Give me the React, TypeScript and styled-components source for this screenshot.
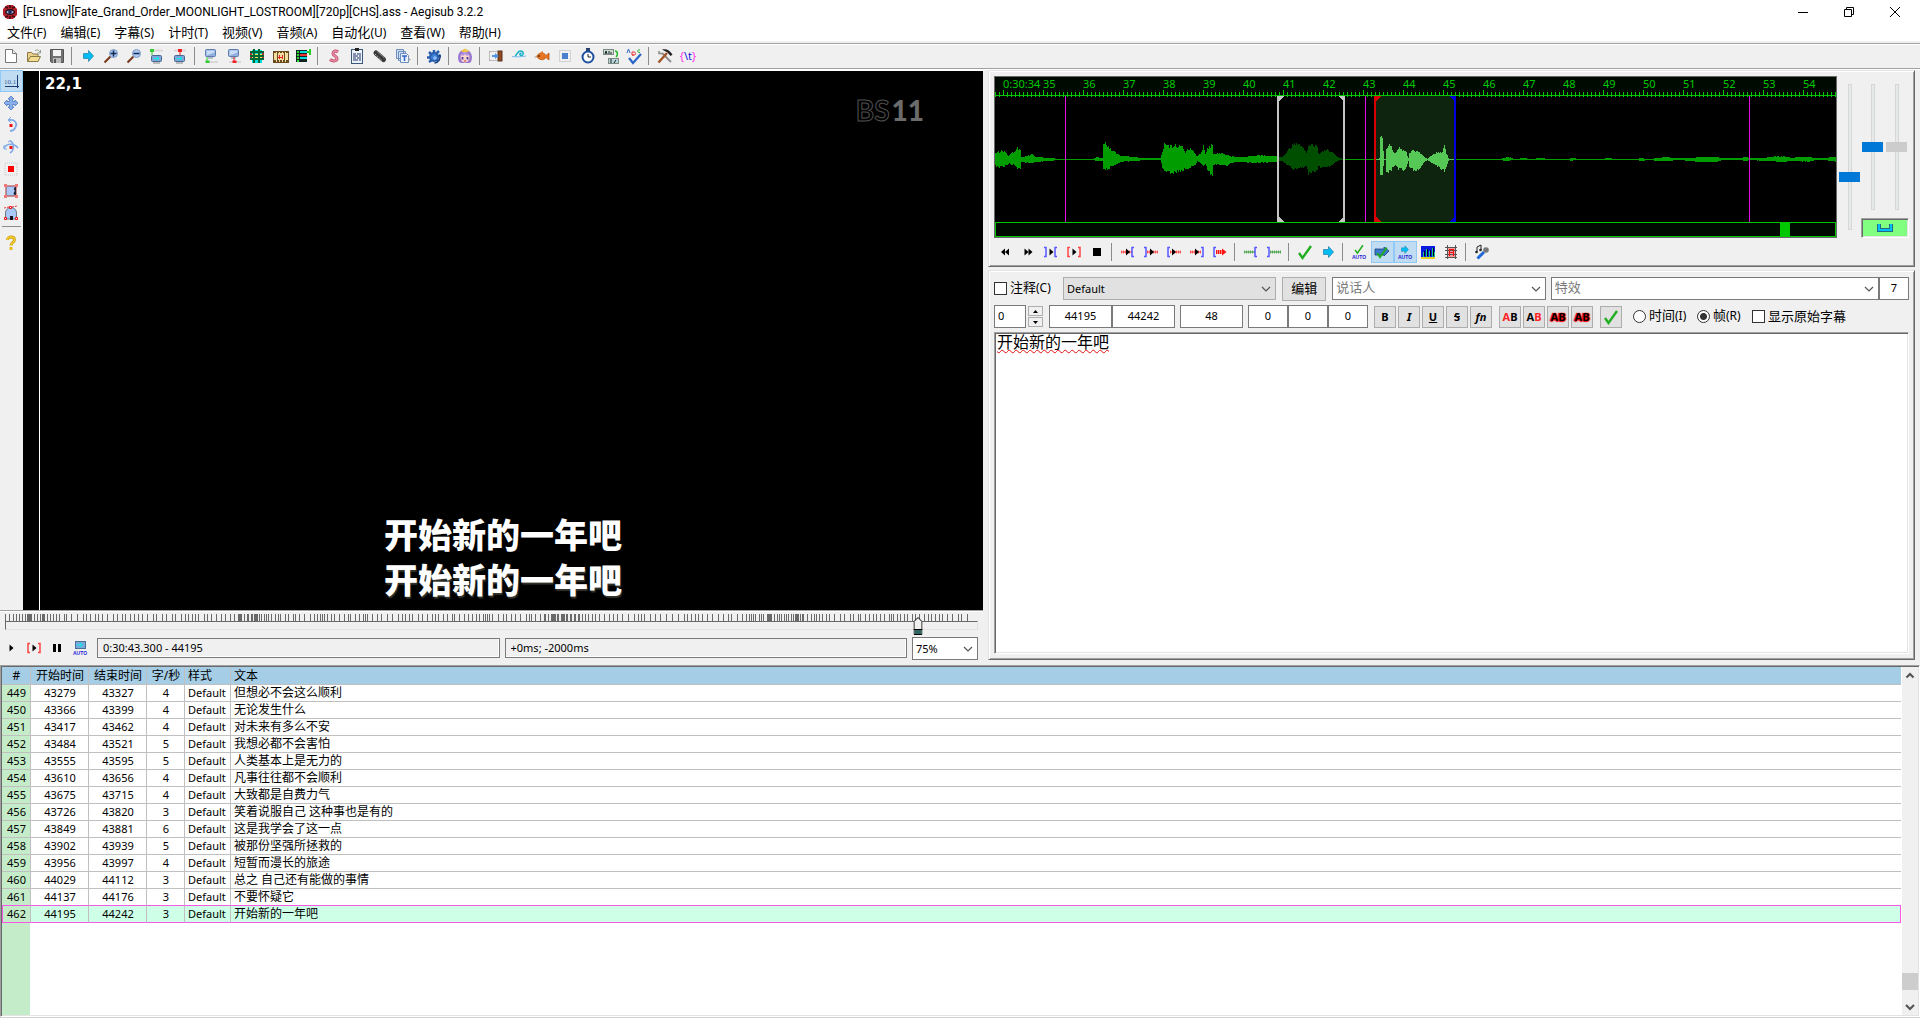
import React from "react";
import styled, { createGlobalStyle, css } from "styled-components";

const UI_FONT = `"Noto Sans", "Noto Sans CJK SC", sans-serif`;

const GlobalStyle = createGlobalStyle`
  *, *::before, *::after { box-sizing: border-box; }
  body { margin: 0; background: #f0f0f0; font-family: ${UI_FONT}; font-size: 11px; color: #000; overflow: hidden; }
  button, input, select, textarea { font: inherit; color: inherit; margin: 0; border-radius: 0; outline: none; }
`;

const raised = css`
  border: 1px solid;
  border-color: #e3e3e3 #696969 #696969 #e3e3e3;
  box-shadow: inset 1px 1px 0 #fff, inset -1px -1px 0 #a0a0a0;
`;

const Window = styled.div`
  display: flex;
  flex-direction: column;
  height: 100vh;
  border-bottom: 1px solid #d2d2d2;
`;

/* ---------- title bar and menu ---------- */

const TitleBar = styled.header`
  display: flex;
  align-items: center;
  height: 24px;
  flex: none;
  padding: 0 2px;
  background: #fff;
`;
const Title = styled.h1`
  flex: 1;
  margin: 0 0 0 5px;
  font-family: Roboto, "Noto Sans", sans-serif;
  font-size: 12px;
  line-height: 20px;
  font-weight: 400;
  white-space: nowrap;
`;
const CaptionButton = styled.button`
  display: flex;
  align-items: center;
  justify-content: center;
  width: 46px;
  height: 20px;
  padding: 0;
  border: 0;
  background: none;
`;
const MenuBar = styled.nav`
  display: flex;
  height: 19px;
  flex: none;
  background: #fff;
  border-bottom: 2px solid #f0f0f0;
`;
const MenuItem = styled.button`
  padding: 0 7px;
  border: 0;
  background: none;
  font-size: 13px;
  line-height: 16px;
  white-space: nowrap;
`;
const Mnemonic = styled.span`
  font-size: 12px;
`;

/* ---------- tool bars ---------- */

const ToolBar = styled.div`
  display: flex;
  flex: none;
  height: 26px;
  border-top: 1px solid #a0a0a0;
  border-bottom: 1px solid #a0a0a0;
  box-shadow: inset 0 1px 0 #fff;
  padding-top: 1px;
`;
const ToolStrip = styled.div<{ $vertical?: boolean }>`
  display: flex;
  flex-direction: ${(p) => (p.$vertical ? "column" : "row")};
  flex: none;
`;
const ToolButton = styled.button<{ $on?: boolean }>`
  display: flex;
  align-items: center;
  justify-content: center;
  width: 23px;
  height: 22px;
  flex: none;
  padding: 0 1px 0 0;
  border: 1px solid ${(p) => (p.$on ? "#90c8f6" : "transparent")};
  background: ${(p) => (p.$on ? "#c0dcf3" : "none")};
`;
const Separator = styled.span<{ $vertical?: boolean }>`
  flex: none;
  width: ${(p) => (p.$vertical ? "23px" : "8px")};
  height: ${(p) => (p.$vertical ? "8px" : "22px")};
  padding: ${(p) => (p.$vertical ? "2px 2px 5px" : "2px 5px 2px 2px")};
  background: #8c8c8c content-box;
`;
const Svg16 = styled.svg`
  width: 16px;
  height: 16px;
  display: block;
  overflow: visible;
`;

/* ---------- main split ---------- */

const Upper = styled.main`
  display: flex;
  flex: none;
  margin-top: 1px;
  box-shadow: 0 -1px 0 #fff;
`;
const VideoColumn = styled.section`
  flex: none;
  display: flex;
  flex-direction: column;
  padding-bottom: 5px;
`;
const VideoRow = styled.div`
  display: flex;
  border-bottom: 1px solid #a0a0a0;
  box-shadow: 0 1px 0 #fff;
`;
const Video = styled.div`
  position: relative;
  width: 960px;
  aspect-ratio: 16 / 9;
  background: #000;
  border-top: 1px solid #fff;
  color: #fff;
`;
const CrossLine = styled.div`
  position: absolute;
  top: 0;
  bottom: 0;
  left: 16px;
  width: 1px;
  background: #fff;
`;
const Coordinates = styled.div`
  position: absolute;
  left: 22px;
  top: 2px;
  font-family: "DejaVu Sans", sans-serif;
  font-size: 15px;
  line-height: 22px;
  font-weight: 700;
`;
const Channel = styled.div`
  position: absolute;
  right: 59px;
  top: 20px;
  display: flex;
  gap: 2px;
  font-family: Lato, sans-serif;
  font-size: 28px;
  line-height: 38px;
  font-weight: 900;
  color: #6b6b6b;
`;
const Outlined = styled.span`
  font-weight: 700;
  color: #000;
  -webkit-text-stroke: 1px #505050;
`;
const Subtitles = styled.div`
  position: absolute;
  inset: auto 0 9px;
  text-align: center;
  font-family: "Noto Sans CJK SC", sans-serif;
  font-size: 34px;
  line-height: 45px;
  font-weight: 900;
`;
const SubtitleLine = styled.div<{ $shadow?: boolean }>`
  text-shadow: ${(p) => (p.$shadow ? "1px 2px 1px #33332c" : "none")};
`;

const SeekBar = styled.div`
  position: relative;
  height: 26px;
  margin: 0 5px;
  padding-top: 3px;
`;
const Ticks = styled.svg`
  display: block;
  width: 100%;
  height: 7px;
`;
const Trough = styled.div`
  height: 9px;
  border: 1px solid;
  border-color: #696969 #e3e3e3 #e3e3e3 #696969;
`;
const SeekThumb = styled.svg`
  position: absolute;
  top: 6px;
  width: 9px;
  height: 18px;
  transform: translateX(-50%);
`;
const SeekInput = styled.input`
  position: absolute;
  inset: 0;
  width: 100%;
  opacity: 0;
`;
const PlayRow = styled.div`
  display: flex;
  gap: 5px;
  height: 23px;
  padding-right: 5px;
`;
const Status = styled.input`
  flex: 1;
  min-width: 0;
  height: 20px;
  margin-top: 1px;
  padding: 0 5px 2px;
  border: 1px solid #7a7a7a;
  box-shadow: inset -1px -1px 0 #fff;
  background: #f0f0f0;
  font-size: 11px;
`;

/* ---------- right side ---------- */

const SideColumn = styled.section`
  flex: 1;
  min-width: 0;
  display: flex;
  flex-direction: column;
  gap: 3px;
  padding: 0 5px 5px;
`;
const AudioBox = styled.section`
  ${raised}
  padding: 5px 5px 3px;
`;
const AudioRow = styled.div`
  display: flex;
  gap: 2px;
  margin-bottom: 3px;
`;
const AudioDisplay = styled.div`
  flex: 1;
  min-width: 0;
  height: 162px;
  border: 1px solid #696969;
  background: #000;
  overflow: hidden;
`;
const Sliders = styled.div`
  display: flex;
  flex: none;
  width: 70px;
  padding-top: 8px;
`;
const SliderPair = styled.div`
  display: flex;
  flex-wrap: wrap;
  align-content: space-between;
  width: 48px;
`;
const VSlider = styled.input<{ $length: number; $cell: number }>`
  appearance: none;
  writing-mode: vertical-lr;
  direction: rtl;
  width: ${(p) => p.$cell}px;
  height: ${(p) => p.$length}px;
  background: none;
  &::-webkit-slider-runnable-track {
    width: 4px;
    background: #e7eaea;
    border: 1px solid #d6d6d6;
  }
  &::-webkit-slider-thumb {
    appearance: none;
    width: 21px;
    height: 10px;
    margin-left: -10px;
    background: #0078d7;
  }
  &:disabled::-webkit-slider-thumb {
    background: #ccc;
  }
`;
const LinkButton = styled.button`
  display: flex;
  align-items: center;
  justify-content: center;
  width: 48px;
  height: 20px;
  padding: 0;
  border: 1px solid;
  border-color: #a0a0a0 #fff #fff #a0a0a0;
  box-shadow: inset 1px 1px 0 #696969, inset -1px -1px 0 #e3e3e3;
  background: #80ff80;
`;

const EditBox = styled.section`
  ${raised}
  flex: 1;
  min-height: 0;
  display: flex;
  flex-direction: column;
  gap: 4px;
  padding: 6px 5px 5px;
`;
const EditRow = styled.div`
  display: flex;
  align-items: flex-start;
  height: 24px;
`;
const FieldRow = styled(EditRow)`
  align-items: center;
  height: 23px;
`;
const Check = styled.label<{ $width: number }>`
  display: flex;
  align-items: center;
  gap: 3px;
  flex: none;
  width: ${(p) => p.$width}px;
  height: 23px;
  font-size: 13px;
  line-height: 18px;
  white-space: nowrap;
`;
const Caption = styled.span`
  padding-bottom: 2px;
`;
const Box = styled.input`
  appearance: none;
  flex: none;
  width: 13px;
  height: 13px;
  border: 1px solid #333;
  background: #fff;
  &[type="radio"] {
    border-radius: 50%;
  }
  &[type="radio"]:checked {
    background: radial-gradient(circle, #333 0 3px, #fff 4px);
  }
`;
const ComboFrame = styled.div<{ $grow: number; $flat?: boolean }>`
  position: relative;
  display: flex;
  flex: ${(p) => p.$grow} 1 0;
  min-width: 0;
  height: 23px;
  border: 1px solid ${(p) => (p.$flat ? "#adadad" : "#7a7a7a")};
  background: ${(p) => (p.$flat ? "#e1e1e1" : "#fff")};
`;
const ZoomFrame = styled(ComboFrame)`
  flex: 0 0 66px;
`;
const SelectField = styled.select`
  appearance: none;
  flex: 1;
  min-width: 0;
  padding: 0 3px;
  border: 0;
  background: none;
`;
const ComboInput = styled.input`
  flex: 1;
  min-width: 0;
  padding: 0 3px 3px;
  border: 0;
  background: none;
  font-size: 13px;
  &::placeholder {
    color: #7a7a7a;
  }
`;
const DropButton = styled.button`
  display: flex;
  align-items: center;
  padding: 0 4px;
  border: 0;
  background: none;
`;
const DropMark = styled.span`
  position: absolute;
  inset: 0 4px 0 auto;
  display: flex;
  align-items: center;
  pointer-events: none;
`;
const PushButton = styled.button`
  flex: none;
  width: 44px;
  height: 24px;
  padding: 0 0 2px;
  border: 1px solid #adadad;
  background: #e1e1e1;
  font-size: 13px;
  line-height: 18px;
`;
const Field = styled.input<{ $width: number; $left?: boolean }>`
  flex: none;
  width: ${(p) => p.$width}px;
  height: 23px;
  padding: 0 3px 2px;
  border: 1px solid #7a7a7a;
  background: #fff;
  text-align: ${(p) => (p.$left ? "left" : "center")};
`;
const Spinner = styled.div`
  display: flex;
  flex-direction: column;
  gap: 1px;
  width: 15px;
  margin-left: 2px;
`;
const SpinButton = styled.button`
  display: flex;
  align-items: center;
  justify-content: center;
  height: 10px;
  padding: 0;
  border: 1px solid #adadad;
  background: #f0f0f0;
`;
const Group = styled.div<{ $gap?: number; $before: number }>`
  display: flex;
  gap: ${(p) => p.$gap ?? 0}px;
  margin-left: ${(p) => p.$before}px;
`;
const StyleButton = styled.button<{ $italic?: boolean; $line?: string }>`
  display: flex;
  align-items: center;
  justify-content: center;
  width: 22px;
  height: 22px;
  padding: 0;
  border: 1px solid #adadad;
  background: #e1e1e1;
  font-size: 11px;
  font-weight: 700;
  font-style: ${(p) => (p.$italic ? "italic" : "normal")};
  text-decoration: ${(p) => p.$line ?? "none"};
`;
const Ink = styled.span<{ $fill: string; $halo?: boolean }>`
  color: ${(p) => p.$fill};
  text-shadow: ${(p) => (p.$halo ? "0 0 1px red, 1px 0 1px red, 0 1px 1px red, -1px 0 1px red" : "none")};
`;
const TextArea = styled.textarea`
  flex: 1;
  min-height: 0;
  width: 100%;
  resize: none;
  padding: 0 2px;
  border: 1px solid;
  border-color: #a0a0a0 #fff #fff #a0a0a0;
  box-shadow: inset 1px 1px 0 #696969, inset -1px -1px 0 #e3e3e3;
  background: #fff;
  font-size: 16px;
  line-height: 18px;
  text-decoration: underline wavy #e01010 1px;
  text-underline-offset: 1px;
`;

/* ---------- subtitle grid ---------- */

const GridFrame = styled.section`
  flex: 1;
  min-height: 0;
  display: flex;
  border: 1px solid;
  border-color: #a0a0a0 #fff #fff #a0a0a0;
  box-shadow: inset 1px 1px 0 #696969, inset -1px -1px 0 #e3e3e3;
  padding: 1px;
`;
const GridBody = styled.div`
  flex: 1;
  min-width: 0;
  overflow: hidden;
  background: linear-gradient(to right, #c4ecc9 28px, #fff 28px);
`;
const Table = styled.table`
  width: 100%;
  table-layout: fixed;
  border-collapse: separate;
  border-spacing: 0;
`;
const Col = styled.col<{ $width?: number }>`
  width: ${(p) => (p.$width ? `${p.$width}px` : "auto")};
`;
const cell = css`
  padding: 0 2px 0 3px;
  border-right: 1px solid #c0c0c0;
  border-bottom: 1px solid #c0c0c0;
  line-height: 16px;
  height: 17px;
  font-weight: 400;
  text-align: center;
  white-space: nowrap;
  overflow: hidden;
`;
const Head = styled.th<{ $left?: boolean }>`
  ${cell}
  height: 18px;
  padding-top: 1px;
  background: #a5cde5;
  font-size: 12px;
  text-align: ${(p) => (p.$left ? "left" : "center")};
  &:last-child {
    border-right: 0;
  }
`;
const Row = styled.tr<{ $active: boolean; $above: boolean }>`
  background: ${(p) => (p.$active ? "#ceffe7" : "#fff")};
  td,
  th {
    ${(p) => (p.$active || p.$above ? "border-bottom-color: #f858e8;" : "")}
  }
  th {
    ${(p) => (p.$active ? "border-left: 1px solid #f858e8; padding-left: 0;" : "")}
  }
  td:last-child {
    border-right: ${(p) => (p.$active ? "1px solid #f858e8" : "0")};
  }
`;
const LineNo = styled.th`
  ${cell}
  padding: 0 0 0 1px;
  background: #c4ecc9;
`;
const Cell = styled.td<{ $left?: boolean; $text?: boolean }>`
  ${cell}
  text-align: ${(p) => (p.$left ? "left" : "center")};
  font-size: ${(p) => (p.$text ? "12px" : "11px")};
`;
const ScrollBar = styled.div`
  display: flex;
  flex-direction: column;
  width: 17px;
  border-left: 1px solid #fff;
  background: #f0f0f0;
`;
const ScrollButton = styled.button`
  display: flex;
  align-items: center;
  justify-content: center;
  height: 17px;
  padding: 0;
  border: 0;
  background: none;
`;
const ScrollTrack = styled.div`
  flex: 1;
  display: flex;
  flex-direction: column;
  justify-content: flex-end;
  padding-bottom: 8px;
`;
const ScrollThumb = styled.div`
  height: 17px;
  background: #cdcdcd;
`;

/* ---------- icons ---------- */

const Monitor = ({ x = 0, y = 0 }: { x?: number; y?: number }) => (
  <g transform={`translate(${x} ${y})`}>
    <rect x=".5" y=".5" width="10" height="7" rx="1" fill="#8fb0e0" stroke="#5d7baa" />
    <path d="M1.500 1.500h8v2l-8 3z" fill="#c9dbf5" />
    <path d="M3 9h5" stroke="#7a8aa0" />
  </g>
);
const Auto = () => (
  <text x="8" y="15" fontSize="5" fontWeight="700" textAnchor="middle" fill="#2222d8" fontFamily="Liberation Sans, sans-serif">
    AUTO
  </text>
);
const Bracket = ({ x, open, color }: { x: number; open: boolean; color: string }) => (
  <path
    d={open ? `M${x + 3} 3.500h-2v9h2` : `M${x} 3.500h2v9h-2`}
    fill="none"
    stroke={color}
    strokeWidth="1.500"
  />
);
const Play = ({ x }: { x: number }) => <path d={`M${x} 4.500v7l4-3.500z`} fill="#000" />;
const Dots = ({ from, to, color = "#f33" }: { from: number; to: number; color?: string }) => (
  <>
    <path d={`M${from} 8h${to - from}`} stroke={color} strokeWidth="1" />
    <path d={`M${from} 8h${to - from}`} stroke={color} strokeWidth="3" strokeDasharray="1 1" opacity=".7" />
  </>
);
const Tick = ({ y = 0, s = 1 }: { y?: number; s?: number }) => (
  <path d="M2 9l3.500 5L14 2" transform={`translate(${8 - 8 * s} ${y}) scale(${s})`} fill="none" stroke="#1fae1f" strokeWidth="2.400" />
);
const CyanArrow = ({ x = 0, y = 0, s = 1 }: { x?: number; y?: number; s?: number }) => (
  <path
    d="M3.500 5.500h5v-3l5 5.500-5 5.500v-3h-5z"
    transform={`translate(${x} ${y}) scale(${s})`}
    fill="#00bdf5"
    stroke="#2f87ad"
    strokeWidth=".8"
  />
);
const Lens = ({ plus }: { plus?: boolean }) => (
  <>
    <path d="M1.500 14.500l6-6" stroke="#7a3b1e" strokeWidth="2.200" />
    <circle cx="10.500" cy="5.500" r="4" fill="#a9c9f3" stroke="#7f9cc4" />
    <path d={plus ? "M7.500 5.500h6M10.500 2.500v6" : "M7.500 5.500h6"} stroke="#152a55" strokeWidth="1.500" />
  </>
);
const SnapTop = ({ color, x = 3 }: { color: string; x?: number }) => (
  <>
    <path d="M2 2.500h12" stroke="#d9d9d9" strokeWidth="2" />
    <path d={`M${x} 2v5`} stroke={color} />
    <rect x={x - 2} y="1" width="4" height="3" fill={color} />
    <rect x="2.500" y="7.500" width="10" height="6" rx="1" fill="#7fa6d8" stroke="#4b6791" />
    <path d="M4.500 10.500h5M7.500 8.500l2.500 2-2.500 2" stroke="#0ee" fill="none" />
    <path d="M4 15h7" stroke="#888" />
  </>
);
const SnapBottom = ({ color, x }: { color: string; x: number }) => (
  <>
    <Monitor x={2} y={1} />
    <path d="M3 14h12" stroke="#d9d9d9" strokeWidth="2" />
    <path d={`M${x} 9v5`} stroke={color} />
    <rect x={x - 1.5} y="12.500" width="4" height="2.500" fill={color} />
  </>
);

const icons: Record<string, React.ReactNode> = {
  app: (
    <>
      <path d="M5 1h6l4 4v6l-4 4H5l-4-4V5z" fill="#b5202a" />
      <path d="M3 3l3 1M13 3l-3 1M3 13l3-1M13 13l-3-1M8 1v3M8 12v3" stroke="#3a0d12" strokeWidth="1.500" />
      <ellipse cx="8" cy="8" rx="5" ry="3" fill="#201018" />
      <ellipse cx="8" cy="8" rx="3.500" ry="1.500" fill="#9fb0d0" />
      <circle cx="8" cy="8" r="1.800" fill="#16245c" />
    </>
  ),
  new: (
    <>
      <path d="M2.500 1.500h7l4 4v9h-11z" fill="#fff" stroke="#777" />
      <path d="M9.500 1.500v4h4" fill="#eee" stroke="#777" />
    </>
  ),
  open: (
    <>
      <path d="M1.500 13.500v-9h4l1.500 1.500h5v7.500z" fill="#e9d08c" stroke="#8a7a44" />
      <path d="M1.500 13.500l3-5h10l-2.500 5z" fill="#f3dc93" stroke="#8a7a44" />
      <path d="M9 3c2-2 4-1 5 1.500M14.500 2v3h-3" fill="none" stroke="#8b9b8b" />
    </>
  ),
  save: (
    <>
      <path d="M1.500 1.500h13v13h-12l-1-1z" fill="#707070" stroke="#555" />
      <rect x="4" y="2" width="8" height="6" fill="#f3f3f3" />
      <rect x="4" y="10" width="8" height="5" fill="#bbb" />
      <rect x="5" y="11" width="2" height="4" fill="#555" />
    </>
  ),
  jump: <CyanArrow />,
  zoomIn: <Lens plus />,
  zoomOut: <Lens />,
  startVideo: <SnapTop color="#3c3" />,
  endVideo: <SnapTop color="#e22" x={8} />,
  snapStart: <SnapBottom color="#3c3" x={4} />,
  snapEnd: <SnapBottom color="#e22" x={8} />,
  scene: (
    <g shapeRendering="crispEdges">
      <rect x="1" y="3" width="14" height="8" fill="#a33" />
      <rect x="3" y="2" width="10" height="13" fill="#0dd" />
      <rect x="3" y="6" width="10" height="5" fill="#e8e05a" />
      <path d="M1 4h14M1 8h14M1 11h14M5 1v14M10 1v14" stroke="#063" strokeWidth="1.500" />
    </g>
  ),
  film: (
    <g shapeRendering="crispEdges">
      <rect x="1" y="3" width="15" height="11" fill="#f5dfa0" stroke="#6b4a1e" />
      <path d="M2 4h14M2 13h14" stroke="#6b4a1e" strokeDasharray="2 1" strokeWidth="2" />
      <path d="M5 5v7M12 5v7" stroke="#6b4a1e" />
      <path d="M6 9h5M7 7v4M10 7v4" stroke="#e22" />
    </g>
  ),
  shift: (
    <g shapeRendering="crispEdges">
      <rect x="1" y="2" width="11" height="12" fill="#122" />
      <path d="M5 4h7M5 10h7" stroke="#0dd" strokeWidth="2" />
      <path d="M5 7h7" stroke="#e33" strokeWidth="2" />
      <path d="M2 4h2M2 7h2M2 10h2M2 13h2" stroke="#3d3" strokeWidth="2" />
      <path d="M12 4h3M15 1v6" stroke="#2c2" strokeWidth="2" />
    </g>
  ),
  styles: (
    <>
      <path d="M12 4c-2.500-2-5-1-5 1.500s4 2.500 4 5-4 3.500-7 1" fill="none" stroke="#b84a68" strokeWidth="3" />
      <path d="M12 4c-2.500-2-5-1-5 1.500s4 2.500 4 5-4 3.500-7 1" fill="none" stroke="#f08aa5" strokeWidth="1.500" />
    </>
  ),
  properties: (
    <>
      <rect x="2.500" y="1.500" width="11" height="14" fill="#e9f1fb" stroke="#3d5876" />
      <rect x="6" y="0" width="4" height="3" fill="#222" />
      <path d="M4 6h3M8 6h4M4 8h5M10 8h2M4 10h3M8 10h4M4 12h5M10 12h2" stroke="#236" />
    </>
  ),
  attach: (
    <>
      <path d="M4 5l7.500 6.500" stroke="#3a3a3a" strokeWidth="5" strokeLinecap="round" />
      <path d="M3 6l7 6.500M5.500 4l7 6" stroke="#aaa" strokeWidth="1" strokeDasharray="1.500 1" />
    </>
  ),
  fonts: (
    <>
      <path d="M1.500 1.500h7v9h-7zM3.500 3.500h7v9h-7z" fill="#cfe0f6" stroke="#6d8dbb" />
      <path d="M5.500 5.500h6l2 2v7h-8z" fill="#e9f2ff" stroke="#6d8dbb" />
      <path d="M7 8h5M9.500 8v5" stroke="#3367c4" strokeWidth="1.500" />
      <path d="M13 10l3 1.500-3 1.500z" fill="#999" />
    </>
  ),
  gear: (
    <>
      <circle cx="8" cy="9" r="4" fill="#3f7fd6" stroke="#2a5fae" strokeWidth="2" />
      <path d="M8 2v4M3 4l3 3M1 9.500h4M3 14l3-2M13 3l-3 3M11 8h4M12 13l-2-2" stroke="#2a5fae" strokeWidth="2.500" />
      <path d="M13.500 6.500c2 4-1 8-5 8.500" stroke="#173f7d" strokeWidth="1.500" fill="none" />
      <circle cx="9" cy="10" r="1.800" fill="#8fc0f8" />
    </>
  ),
  girl: (
    <>
      <path d="M1 9a7 7.500 0 0 1 14 0c0 3-1 6-3 6H4c-2 0-3-3-3-6z" fill="#9a78cf" />
      <ellipse cx="8" cy="9.500" rx="4.500" ry="5" fill="#f8d8cc" />
      <path d="M3 9c0-6 10-6 10 0l-2-2-1.500 1L8 6 6.500 8 5 7z" fill="#b493e0" />
      <path d="M4 2.500l2.500-1L8 .5l1.500 1 2.500 1-1 1.500H5z" fill="#f0c84a" />
      <path d="M5.500 9v2.500M10.500 9v2.500" stroke="#5334a0" strokeWidth="1.800" />
      <path d="M7 13h2" stroke="#c33" />
    </>
  ),
  shiftTimes: (
    <>
      <path d="M1.500 3.500h7M1.500 3.500v9M1.500 12.500h7" stroke="#888" strokeDasharray="1 1" fill="none" />
      <rect x="10" y="3" width="4" height="10" fill="#8a4a24" stroke="#5f3218" />
      <path d="M4 7h3V5l3.500 3L7 11V9H4z" fill="#4d94ea" />
    </>
  ),
  kanji: (
    <>
      <path d="M1 8.500c4 .5 9 .5 14-.5" stroke="#7fb8e8" fill="none" />
      <path d="M4 8c2-.5 2-5 5.500-5 4 0 3 5 .5 4.500-2-.5-1-2.500.5-2" fill="none" stroke="#14b0c8" strokeWidth="1.500" />
    </>
  ),
  fish: (
    <>
      <path d="M2.500 8.500c2-4 7-5 9.500-1L15 5v7l-3-2.500c-2.500 3.500-7 2.500-9.500-1z" fill="#e87422" stroke="#b4560f" strokeWidth=".8" />
      <path d="M6 4.500l3-1.500v2" fill="#e87422" />
      <circle cx="5" cy="8" r=".8" fill="#000" />
      <path d="M.5 9h2" stroke="#999" />
    </>
  ),
  resample: (
    <>
      <rect x="2.500" y="2.500" width="11" height="11" fill="none" stroke="#b5b5b5" strokeDasharray="1 1" />
      <rect x="5" y="5" width="6" height="6" fill="#4b7fd0" />
    </>
  ),
  timer: (
    <>
      <rect x="6" y="0" width="4" height="3" fill="#27416b" />
      <circle cx="8" cy="9" r="5.500" fill="#fff" stroke="#1e4fa0" strokeWidth="2" />
      <path d="M8 6v3h3" stroke="#222" fill="none" />
    </>
  ),
  convert: (
    <>
      <rect x=".5" y="1.500" width="10" height="5" fill="#cfdad2" stroke="#7b8a82" />
      <path d="M2 6l1-3 1 3M6 3v3M8 4v2" stroke="#122" fill="none" />
      <rect x="5.500" y="10.500" width="10" height="5" fill="#bcd6dc" stroke="#7b8a82" />
      <path d="M8 11v4M11 15l2-3" stroke="#122" />
      <path d="M12 3c3 0 3 4 1 6" fill="none" stroke="#2b2" strokeWidth="1.500" />
    </>
  ),
  spell: (
    <>
      <path d="M1 5l1.500-4L4 5" fill="none" stroke="#36c" />
      <path d="M6 4h2a1.500 1.500 0 0 1 0 3H6zM6 7h2" fill="none" stroke="#e33" />
      <path d="M14 2c-3-1-3 3 0 2.500" fill="none" stroke="#2a2" />
      <path d="M3 10l4 5 8-9" fill="none" stroke="#2e66c8" strokeWidth="2.200" />
    </>
  ),
  options: (
    <>
      <path d="M5 5l9 9" stroke="#8c8c8c" strokeWidth="2" />
      <path d="M2 3v2.500h3" fill="none" stroke="#888" strokeWidth="1.500" />
      <path d="M1.500 14.500L10 5" stroke="#a4552a" strokeWidth="2.500" />
      <path d="M5 1.500c4-1 7.500 0 10.500 5l-2 1.500-3-3.500z" fill="#222" />
    </>
  ),
  tags: (
    <text x="8" y="12" fontSize="11" textAnchor="middle" fill="#1a1ae0" fontFamily="Noto Sans, sans-serif">
      <tspan fill="#f3e">{"{"}</tspan>
      {"\\t"}
      <tspan fill="#f3e">{"}"}</tspan>
    </text>
  ),
  cross: (
    <>
      <path d="M2 13.500h14M14.500 2v13" stroke="#1b3a6e" />
      <text x="7" y="11" fontSize="7" textAnchor="middle" fill="#3c5f94" fontFamily="Liberation Serif, serif">
        10.1
      </text>
    </>
  ),
  drag: (
    <path
      d="M8 1l3 3H9.500v2.500H12V5l3 3-3 3V9.500H9.500V12H11l-3 3-3-3h1.500V9.500H4V11L1 8l3-3v1.500h2.500V4H5z"
      fill="#8ab0ee"
      stroke="#4a76bd"
      strokeWidth=".8"
    />
  ),
  rotateZ: (
    <>
      <path d="M6 3c6-1 8 3 7 6s-3 5-6 5" fill="none" stroke="#7fa9e8" strokeWidth="1.800" />
      <path d="M8 0L5 3l3 3" fill="none" stroke="#7fa9e8" />
      <rect x="6.500" y="7" width="3" height="3" fill="#e11" />
    </>
  ),
  rotateXY: (
    <>
      <path d="M1 9c3-5 10-5 14 0M7 2c4 1 5 9 0 12" fill="none" stroke="#7fa9e8" strokeWidth="1.500" />
      <path d="M1 6v4h3M8 1L5 3" fill="none" stroke="#7fa9e8" />
      <rect x="6.500" y="7" width="3" height="3" fill="#e11" />
    </>
  ),
  scale: (
    <>
      <rect x="2" y="2" width="12" height="12" fill="none" stroke="#c5c5c5" strokeDasharray="1 1" />
      <rect x="5" y="5" width="6" height="6" fill="#f00" />
    </>
  ),
  clip: (
    <>
      <rect x="3" y="3" width="10" height="10" fill="#a9c8f8" stroke="#a33" />
      <path d="M13 4v8c-3 0-3-2-1-4-2-2-1-4 1-4z" fill="#223" />
      <path d="M1 1h3v3H1zM12 1h3v3h-3zM1 12h3v3H1zM12 12h3v3h-3z" fill="#f27878" />
    </>
  ),
  vectorClip: (
    <>
      <path d="M2.500 14V8a5.500 5.500 0 0 1 11 0v6z" fill="#a9c8f8" stroke="#678" />
      <path d="M1 3l5-1M9 2l5-1" stroke="#e33" strokeDasharray="2 1" />
      <path d="M7 11h3v4H7z" fill="#112" />
      <path d="M1.500 12.500h2v2h-2zM12.500 12.500h2v2h-2zM6.500 1.500h2v2h-2z" fill="#fff" stroke="#e11" />
    </>
  ),
  help: (
    <>
      <path d="M4.500 5c0-4 7-4 7 0 0 2.500-3.500 2.500-3.500 5.500" fill="none" stroke="#c79a10" strokeWidth="2.800" />
      <path d="M4.500 5c0-4 7-4 7 0 0 2.500-3.500 2.500-3.500 5.500" fill="none" stroke="#f7cf2a" strokeWidth="1.500" />
      <rect x="6.500" y="12" width="3" height="3" fill="#e8b918" />
    </>
  ),
  prev: <path d="M8 4.500v7L4 8zM12 4.500v7L8 8z" fill="#000" />,
  next: <path d="M4.500 4.500v7l4-3.500zM8.500 4.500v7l4-3.500z" fill="#000" />,
  playSel: (
    <>
      <Bracket x={1} open={false} color="#55f" />
      <Play x={6.5} />
      <Bracket x={11} open color="#55f" />
    </>
  ),
  playLine: (
    <>
      <Bracket x={1} open color="#f44" />
      <Play x={6.5} />
      <Bracket x={12} open={false} color="#f44" />
    </>
  ),
  stop: <rect x="4" y="4" width="8" height="8" fill="#000" />,
  beforeStart: (
    <>
      <Dots from={1} to={12} />
      <Play x={6} />
      <Bracket x={11} open color="#55f" />
    </>
  ),
  afterEnd: (
    <>
      <Dots from={4} to={15} />
      <Play x={7} />
      <Bracket x={1} open={false} color="#55f" />
    </>
  ),
  firstPart: (
    <>
      <Dots from={4} to={15} />
      <Play x={6} />
      <Bracket x={1} open color="#55f" />
    </>
  ),
  lastPart: (
    <>
      <Dots from={1} to={12} />
      <Play x={6} />
      <Bracket x={12} open={false} color="#55f" />
    </>
  ),
  toEnd: (
    <>
      <path d="M4 8h6" stroke="#f11" strokeWidth="4" strokeDasharray="1.500 .5" />
      <path d="M10 4.500v7l4.500-3.500z" fill="#f11" />
      <Bracket x={1} open color="#55f" />
    </>
  ),
  leadIn: (
    <>
      <Dots from={1} to={12} color="#393" />
      <Bracket x={11} open color="#55f" />
    </>
  ),
  leadOut: (
    <>
      <Dots from={4} to={15} color="#393" />
      <Bracket x={1} open={false} color="#55f" />
    </>
  ),
  commit: <Tick />,
  autoCommit: (
    <>
      <Tick s={0.65} />
      <Auto />
    </>
  ),
  nextCommit: (
    <>
      <path d="M1 5h9V3l5 4-5 5v-1H1z" fill="#3b78cf" stroke="#1d3f7d" strokeWidth=".8" />
      <Tick s={0.8} y={2} />
    </>
  ),
  autoNext: (
    <>
      <CyanArrow x={2} y={0} s={0.7} />
      <Auto />
    </>
  ),
  spectrum: (
    <g shapeRendering="crispEdges">
      <rect x="1" y="2" width="14" height="13" fill="#0a1ae0" />
      <path d="M3 15V8M6 15V5M9 15V7M12 15V4M14 15V8" stroke="#1c8" strokeWidth="1" />
      <path d="M1 14h14" stroke="#e8d020" strokeWidth="2" />
      <path d="M4 7v5M7 5v7M10 6v6M13 4v8" stroke="#002" />
    </g>
  ),
  keyframes: (
    <g shapeRendering="crispEdges">
      <rect x="4" y="3" width="8" height="10" fill="#f99" />
      <path d="M2 3h12M2 6h12M2 10h12M2 13h12M4 1v14M12 1v14" stroke="#555" />
      <path d="M6 12V5h4v7M6 8h4" stroke="#e11" fill="none" />
    </g>
  ),
  karaoke: (
    <>
      <path d="M3.500 14.500L10 8" stroke="#1f68d8" strokeWidth="3" />
      <circle cx="12" cy="6" r="2.800" fill="#777" />
      <path d="M3 8V3l4-2v5" fill="none" stroke="#222" />
      <circle cx="2.500" cy="8" r="1.300" fill="#222" />
      <circle cx="6.500" cy="6" r="1.300" fill="#222" />
    </>
  ),
  play: <Play x={6.5} />,
  pause: <path d="M4 4h3v8H4zM9 4h3v8H9z" fill="#000" />,
  autoScroll: (
    <>
      <rect x="3.500" y="1.500" width="10" height="7" fill="#79aadb" stroke="#4a6f98" />
      <path d="M5 5h4M8 3l2.500 2L8 7" stroke="#0ee" fill="none" />
      <Auto />
    </>
  ),
};

const Icon = ({ name }: { name: string }) => (
  <Svg16 viewBox="0 0 16 16" aria-hidden="true">
    {icons[name]}
  </Svg16>
);

const Chevron = ({ bold, up }: { bold?: boolean; up?: boolean }) => (
  <svg width="10" height="10" viewBox="0 0 10 10" aria-hidden="true">
    <path
      d={up ? "M1.500 6.500L5 3l3.500 3.500" : "M1 3l4 4 4-4"}
      fill="none"
      stroke="#555"
      strokeWidth={bold ? 2.2 : 1.2}
    />
  </svg>
);

const Tools = ({ items, on = [], vertical, label }: { items: string; on?: string[]; vertical?: boolean; label: string }) => (
  <ToolStrip $vertical={vertical} role="toolbar" aria-label={label}>
    {items.split(" ").map((name, i) =>
      name === "|" ? (
        <Separator key={i} $vertical={vertical} />
      ) : (
        <ToolButton key={i} $on={on.includes(name)} aria-label={name}>
          <Icon name={name} />
        </ToolButton>
      )
    )}
  </ToolStrip>
);

/* ---------- audio display ---------- */

function noise(seed: number) {
  let s = seed;
  return () => {
    s = (s * 1103515245 + 12345) & 0x7fffffff;
    return s / 0x7fffffff;
  };
}

/* [x, height above the axis, height below the axis] */
const envelope: [number, number, number][] = [
  [0, 6, 6], [7, 9, 8], [13, 4, 4], [19, 8, 5], [22, 11, 9], [25, 10, 9], [26, 2, 2], [30, 3, 3], [37, 5, 3],
  [40, 2, 2], [45, 2, 2], [49, 1, 1], [69, 0, 0], [98, 0, 0], [101, 2, 1], [107, 1, 1], [108, 17, 10], [113, 13, 9],
  [118, 8, 6], [125, 3, 2], [140, 2, 1], [150, 1, 0], [165, 1, 0], [167, 7, 7], [169, 15, 10], [175, 13, 13],
  [187, 14, 12], [190, 7, 9], [195, 12, 8], [200, 5, 5], [202, 3, 1], [205, 6, 3], [208, 14, 7], [210, 5, 5],
  [213, 12, 12], [217, 14, 16], [218, 5, 5], [225, 6, 5], [232, 4, 6], [235, 3, 3], [245, 2, 2], [262, 4, 3],
  [282, 3, 2], [287, 2, 1], [292, 8, 5], [297, 15, 9], [302, 17, 9], [308, 13, 8], [311, 6, 6], [313, 13, 14],
  [318, 15, 13], [322, 13, 11], [323, 6, 7], [328, 8, 8], [333, 10, 8], [338, 6, 4], [342, 2, 1], [345, 1, 0],
  [348, 0, 0], [383, 0, 0], [384, 1, 0], [385, 25, 14], [387, 20, 14], [389, 0, 0], [390, 0, 0], [391, 10, 12],
  [395, 16, 12], [398, 7, 7], [400, 6, 5], [403, 12, 10], [410, 9, 10], [413, 1, 1], [414, 7, 6], [418, 9, 10],
  [423, 8, 11], [428, 3, 3], [432, 0, 0], [435, 3, 2], [440, 6, 5], [447, 8, 10], [449, 16, 11], [451, 6, 7],
  [453, 1, 1], [455, 0, 0], [506, 0, 0], [508, 1, 1], [512, 2, 1], [517, 1, 0], [518, 0, 0], [524, 0, 0],
  [525, 1, 0], [531, 1, 0], [532, 0, 0], [540, 0, 0], [541, 1, 0], [549, 1, 0], [550, 0, 0], [574, 0, 0],
  [575, 1, 1], [580, 1, 0], [582, 0, 0], [609, 0, 0], [610, 1, 0], [616, 1, 0], [617, 0, 0], [642, 0, 0],
  [645, 1, 1], [655, 0, 0], [662, 1, 1], [672, 2, 1], [682, 1, 0], [697, 1, 1], [702, 2, 2], [722, 2, 2],
  [726, 1, 0], [745, 1, 0], [749, 2, 1], [756, 1, 0], [769, 1, 1], [773, 2, 1], [787, 3, 2], [797, 1, 1],
  [802, 2, 1], [814, 2, 2], [820, 1, 0], [830, 1, 0], [835, 2, 1], [841, 2, 2],
];

const Waveform = () => {
  const rand = noise(7);
  const paths = { normal: "", inactive: "", selected: "" };
  let k = 0;
  for (let x = 0; x < 841; x++) {
    while (k < envelope.length - 2 && envelope[k + 1][0] <= x) k++;
    const [x0, u0, d0] = envelope[k];
    const [x1, u1, d1] = envelope[k + 1];
    const t = (x - x0) / (x1 - x0);
    const up = Math.round((u0 + (u1 - u0) * t) * (0.8 + rand() * 0.3));
    const down = Math.round((d0 + (d1 - d0) * t) * (0.8 + rand() * 0.3));
    const kind = x >= 283 && x < 349 ? "inactive" : x >= 381 && x < 459 ? "selected" : "normal";
    paths[kind] += `M${x} ${82 - up}h1v${up + down + 1}h-1z`;
  }
  return (
    <>
      <path d={paths.normal} fill="#009c00" />
      <path d={paths.inactive} fill="#004e00" />
      <path d={paths.selected} fill="#55c855" />
    </>
  );
};

const seconds = Array.from({ length: 21 }, (_, i) => i);

const AudioView = () => (
  <svg width="100%" height="160" shapeRendering="crispEdges" role="img" aria-label="音频波形">
    <rect width="100%" height="18" fill="#000a00" />
    <path d={Array.from({ length: 211 }, (_, i) => `M${i * 4} ${i % 10 === 2 ? 13 : 15}h1v5h-1z`).join("")} fill="#00c800" />
    <rect y="18" width="100%" height="1" fill="#00c800" />
    <g fill="#00c800" fontSize="11">
      {seconds.map((i) => (
        <text key={i} x={8 + i * 40} y="11">
          {i === 0 ? "0:30:34" : 34 + i}
        </text>
      ))}
    </g>
    <rect x="381" y="19" width="78" height="126" fill="#0e240e" />
    <Waveform />
    <path d="M70 19h1v126h-1zM370 19h1v126h-1zM754 19h1v126h-1z" fill="#e010e0" />
    <path d="M282 19h7l-5 5v116l5 5h-7zM350 19h-7l5 5v116l-5 5h7z" fill="#c4c4c4" />
    <path d="M379 19h7l-5 5v116l5 5h-7z" fill="#d80000" />
    <path d="M461 19h-7l5 5v116l-5 5h7z" fill="#0000e0" />
    <rect y="145" width="100%" height="15" fill="#00c800" />
    <svg y="146" width="100%" height="13">
      <rect x="1" width="839" height="13" fill="#000a00" />
      <rect x="785" width="10" height="13" fill="#00c800" />
    </svg>
  </svg>
);

const KeyframeTicks = () => {
  const rand = noise(42);
  let d = "";
  let x = 0;
  while (x < 968) {
    d += `M${x} 0h1v7h-1z`;
    const density = Math.sin(x / 17) + Math.sin(x / 41 + 1);
    if (density > 1.2) x += 1 + Math.floor(rand() * 3);
    else if (density > 0) x += 2 + Math.floor(rand() * 4);
    else x += 3 + Math.floor(rand() * 4);
  }
  return (
    <Ticks viewBox="0 0 973 7" preserveAspectRatio="none" shapeRendering="crispEdges" aria-hidden="true">
      <path d={d} fill="#696969" />
    </Ticks>
  );
};

/* ---------- data ---------- */

const menus: [string, string][] = [
  ["文件", "(F)"],
  ["编辑", "(E)"],
  ["字幕", "(S)"],
  ["计时", "(T)"],
  ["视频", "(V)"],
  ["音频", "(A)"],
  ["自动化", "(U)"],
  ["查看", "(W)"],
  ["帮助", "(H)"],
];

const lines: [number, number, number, number, string][] = [
  [449, 43279, 43327, 4, "但想必不会这么顺利"],
  [450, 43366, 43399, 4, "无论发生什么"],
  [451, 43417, 43462, 4, "对未来有多么不安"],
  [452, 43484, 43521, 5, "我想必都不会害怕"],
  [453, 43555, 43595, 5, "人类基本上是无力的"],
  [454, 43610, 43656, 4, "凡事往往都不会顺利"],
  [455, 43675, 43715, 4, "大致都是自费力气"],
  [456, 43726, 43820, 3, "笑着说服自己 这种事也是有的"],
  [457, 43849, 43881, 6, "这是我学会了这一点"],
  [458, 43902, 43939, 5, "被那份坚强所拯救的"],
  [459, 43956, 43997, 4, "短暂而漫长的旅途"],
  [460, 44029, 44112, 3, "总之 自己还有能做的事情"],
  [461, 44137, 44176, 3, "不要怀疑它"],
  [462, 44195, 44242, 3, "开始新的一年吧"],
];
const activeLine = 462;

export default function App() {
  return (
    <Window>
      <GlobalStyle />
      <TitleBar>
        <Icon name="app" />
        <Title>[FLsnow][Fate_Grand_Order_MOONLIGHT_LOSTROOM][720p][CHS].ass - Aegisub 3.2.2</Title>
        <CaptionButton aria-label="最小化">
          <svg width="10" height="10"><path d="M0 5.500h10" stroke="#000" /></svg>
        </CaptionButton>
        <CaptionButton aria-label="还原">
          <svg width="10" height="10"><path d="M.5 2.500h7v7h-7zM2.500 2.500v-2h7v7h-2" fill="none" stroke="#000" /></svg>
        </CaptionButton>
        <CaptionButton aria-label="关闭">
          <svg width="10" height="10"><path d="M0 0l10 10M10 0L0 10" stroke="#000" /></svg>
        </CaptionButton>
      </TitleBar>
      <MenuBar>
        {menus.map(([name, key]) => (
          <MenuItem key={name}>
            {name}
            <Mnemonic>{key}</Mnemonic>
          </MenuItem>
        ))}
      </MenuBar>
      <ToolBar>
        <Tools
          label="主工具栏"
          items="new open save | jump zoomIn zoomOut startVideo endVideo | snapStart snapEnd scene film shift | styles properties attach fonts | gear | girl | shiftTimes kanji fish resample timer convert spell | options tags"
        />
      </ToolBar>

      <Upper>
        <VideoColumn>
          <VideoRow>
            <Tools label="视频工具" vertical on={["cross"]} items="cross drag rotateZ rotateXY scale clip vectorClip | help" />
            <Video>
              <CrossLine />
              <Coordinates>22,1</Coordinates>
              <Channel>
                <Outlined>BS</Outlined>
                <span>11</span>
              </Channel>
              <Subtitles>
                <SubtitleLine>开始新的一年吧</SubtitleLine>
                <SubtitleLine $shadow>开始新的一年吧</SubtitleLine>
              </Subtitles>
            </Video>
          </VideoRow>
          <SeekBar>
            <KeyframeTicks />
            <Trough />
            <SeekThumb style={{ left: `${(44195 / 47080) * 100}%` }} viewBox="0 0 9 18" aria-hidden="true">
              <path d="M.5 4.500l4-4 4 4v13h-8z" fill="#f0f0f0" stroke="#000" />
              <path d="M1 13h7v4H1z" fill="#2f6560" />
              <path d="M0 12.500h9" stroke="#000" />
            </SeekThumb>
            <SeekInput type="range" aria-label="视频位置" min={0} max={47080} defaultValue={44195} />
          </SeekBar>
          <PlayRow>
            <Tools label="播放" items="play playLine pause autoScroll" />
            <Status readOnly aria-label="当前时间" value="0:30:43.300 - 44195" />
            <Status readOnly aria-label="相对时间" value="+0ms; -2000ms" />
            <ZoomFrame $grow={0}>
              <SelectField aria-label="缩放">
                <option>75%</option>
              </SelectField>
              <DropMark>
                <Chevron />
              </DropMark>
            </ZoomFrame>
          </PlayRow>
        </VideoColumn>

        <SideColumn>
          <AudioBox>
            <AudioRow>
              <AudioDisplay>
                <AudioView />
              </AudioDisplay>
              <Sliders>
                <VSlider type="range" aria-label="水平缩放" $length={146} $cell={22} defaultValue={35} />
                <SliderPair>
                  <VSlider type="range" aria-label="垂直缩放" $length={126} $cell={24} defaultValue={50} />
                  <VSlider type="range" aria-label="音量" $length={126} $cell={24} defaultValue={50} disabled />
                  <LinkButton aria-label="联动">
                    <svg width="16" height="8" aria-hidden="true">
                      <path d="M2 0v6h12V0" fill="none" stroke="#236a86" strokeWidth="4" />
                      <path d="M2 0v6h12V0" fill="none" stroke="#00bdf5" strokeWidth="2" />
                    </svg>
                  </LinkButton>
                </SliderPair>
              </Sliders>
            </AudioRow>
            <Tools
              label="音频工具"
              on={["nextCommit", "autoNext"]}
              items="prev next playSel playLine stop | beforeStart afterEnd firstPart lastPart toEnd | leadIn leadOut | commit jump | autoCommit nextCommit autoNext spectrum keyframes | karaoke"
            />
          </AudioBox>

          <EditBox>
            <EditRow>
              <Check $width={69}>
                <Box type="checkbox" />
                <Caption>注释<Mnemonic>(C)</Mnemonic></Caption>
              </Check>
              <ComboFrame $grow={213} $flat>
                <SelectField aria-label="样式">
                  <option>Default</option>
                </SelectField>
                <DropMark>
                  <Chevron />
                </DropMark>
              </ComboFrame>
              <Group $before={6}>
                <PushButton>编辑</PushButton>
              </Group>
              <Group $before={6} />
              <ComboFrame $grow={213}>
                <ComboInput placeholder="说话人" aria-label="说话人" />
                <DropButton aria-label="说话人列表">
                  <Chevron />
                </DropButton>
              </ComboFrame>
              <Group $before={5} />
              <ComboFrame $grow={329}>
                <ComboInput placeholder="特效" aria-label="特效" />
                <DropButton aria-label="特效列表">
                  <Chevron />
                </DropButton>
              </ComboFrame>
              <Field $width={30} aria-label="字符数" defaultValue="7" />
            </EditRow>
            <FieldRow>
              <Field $width={32} $left aria-label="层" defaultValue="0" />
              <Spinner>
                <SpinButton aria-label="增加">
                  <svg width="5" height="3"><path d="M0 3L2.500 0 5 3z" /></svg>
                </SpinButton>
                <SpinButton aria-label="减少">
                  <svg width="5" height="3"><path d="M0 0l2.500 3L5 0z" /></svg>
                </SpinButton>
              </Spinner>
              <Group $before={6}>
                <Field $width={63} aria-label="开始时间" defaultValue="44195" />
                <Field $width={63} aria-label="结束时间" defaultValue="44242" />
              </Group>
              <Group $before={5}>
                <Field $width={63} aria-label="持续时间" defaultValue="48" />
              </Group>
              <Group $before={5}>
                <Field $width={40} aria-label="左边距" defaultValue="0" />
                <Field $width={40} aria-label="右边距" defaultValue="0" />
                <Field $width={40} aria-label="垂直边距" defaultValue="0" />
              </Group>
              <Group $before={6} $gap={2}>
                <StyleButton>B</StyleButton>
                <StyleButton $italic>I</StyleButton>
                <StyleButton $line="underline">U</StyleButton>
                <StyleButton $line="line-through">S</StyleButton>
                <StyleButton $italic>fn</StyleButton>
              </Group>
              <Group $before={7} $gap={2}>
                <StyleButton aria-label="主要颜色"><Ink $fill="#f22">A</Ink><Ink $fill="#000">B</Ink></StyleButton>
                <StyleButton aria-label="次要颜色"><Ink $fill="#000">A</Ink><Ink $fill="#f22">B</Ink></StyleButton>
                <StyleButton aria-label="边框颜色"><Ink $fill="#000" $halo>AB</Ink></StyleButton>
                <StyleButton aria-label="阴影颜色"><Ink $fill="#000" $halo>AB</Ink></StyleButton>
              </Group>
              <Group $before={7}>
                <StyleButton aria-label="提交"><Icon name="commit" /></StyleButton>
              </Group>
              <Group $before={11}>
                <Check $width={64}>
                  <Box type="radio" name="unit" />
                  <Caption>时间<Mnemonic>(I)</Mnemonic></Caption>
                </Check>
                <Check $width={55}>
                  <Box type="radio" name="unit" defaultChecked />
                  <Caption>帧<Mnemonic>(R)</Mnemonic></Caption>
                </Check>
                <Check $width={98}>
                  <Box type="checkbox" />
                  <Caption>显示原始字幕</Caption>
                </Check>
              </Group>
            </FieldRow>
            <TextArea aria-label="字幕文本" spellCheck={false} defaultValue="开始新的一年吧" />
          </EditBox>
        </SideColumn>
      </Upper>

      <GridFrame>
        <GridBody>
          <Table>
            <colgroup>
              <Col $width={29} />
              <Col $width={58} />
              <Col $width={58} />
              <Col $width={38} />
              <Col $width={46} />
              <Col />
            </colgroup>
            <thead>
              <tr>
                <Head>#</Head>
                <Head>开始时间</Head>
                <Head>结束时间</Head>
                <Head>字/秒</Head>
                <Head $left>样式</Head>
                <Head $left>文本</Head>
              </tr>
            </thead>
            <tbody>
              {lines.map(([no, start, end, cps, text]) => (
                <Row key={no} $active={no === activeLine} $above={no === activeLine - 1}>
                  <LineNo scope="row">{no}</LineNo>
                  <Cell>{start}</Cell>
                  <Cell>{end}</Cell>
                  <Cell>{cps}</Cell>
                  <Cell $left>Default</Cell>
                  <Cell $left $text>{text}</Cell>
                </Row>
              ))}
            </tbody>
          </Table>
        </GridBody>
        <ScrollBar>
          <ScrollButton aria-label="向上滚动">
            <Chevron bold up />
          </ScrollButton>
          <ScrollTrack>
            <ScrollThumb />
          </ScrollTrack>
          <ScrollButton aria-label="向下滚动">
            <Chevron bold />
          </ScrollButton>
        </ScrollBar>
      </GridFrame>
    </Window>
  );
}
